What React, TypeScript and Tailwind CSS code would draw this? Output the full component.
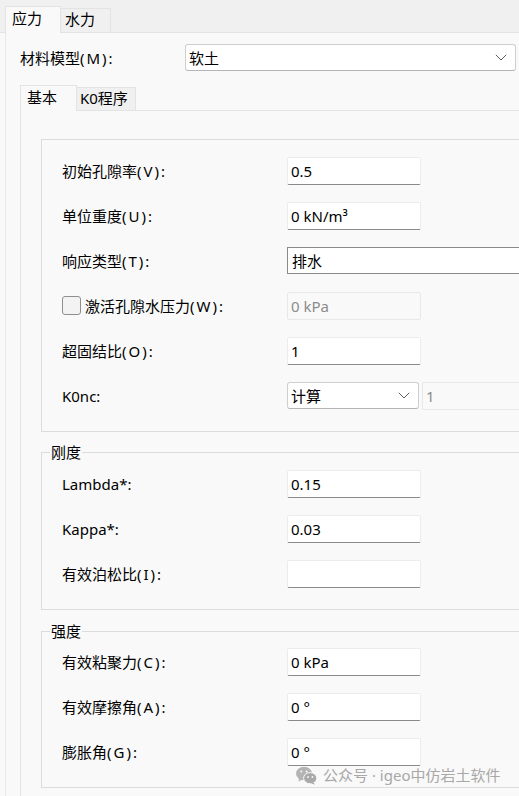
import React from "react";

const FONT = { fontFamily: '"Noto Sans", "Noto Sans CJK SC", sans-serif' };

function Chevron() {
  return (
    <svg width="12" height="7" viewBox="0 0 12 7" fill="none">
      <path d="M0.8 0.8 L6 6 L11.2 0.8" stroke="#5f5f5f" strokeWidth="1" />
    </svg>
  );
}

function Label({ text }: { text: string }) {
  const i = text.indexOf("(");
  if (i < 0) return <span>{text}</span>;
  return (
    <span>
      {text.slice(0, i)}
      <span className="tracking-[2px]">{text.slice(i)}</span>
    </span>
  );
}

function TextBox({ value, disabled }: { value: string; disabled?: boolean }) {
  if (disabled) {
    return (
      <div className="w-[134px] h-[28px] bg-[#f9f9f9] border border-[#e8e8e8] rounded-[2px] flex items-center pl-[3px] text-[#8c8c8c] text-[15px] leading-[20px]">
        {value}
      </div>
    );
  }
  return (
    <div className="w-[134px] h-[28px] bg-white border border-[#ececec] border-b-[#8a8a8a] rounded-[2px] flex items-center pl-[3px] text-black text-[15px] leading-[20px]">
      {value}
    </div>
  );
}

function Row({ label, children }: { label: React.ReactNode; children: React.ReactNode }) {
  return (
    <div className="h-[45px] flex items-center">
      <div className="w-[225px] text-[15px] leading-[20px] text-black">
        {typeof label === "string" ? <Label text={label} /> : label}
      </div>
      {children}
    </div>
  );
}

function Group({ title, children, pt }: { title?: string; children: React.ReactNode; pt: string }) {
  return (
    <div className={`relative border border-[#dcdcdc] ml-[20px] mr-[-40px] pl-[20px] pb-[13px] ${pt}`}>
      {title && (
        <span className="absolute top-[-11px] left-[8px] bg-[#f9f9f9] px-[1px] text-[15px] leading-[20px] text-black">
          {title}
        </span>
      )}
      {children}
    </div>
  );
}

export default function App() {
  return (
    <div className="relative w-[519px] h-[796px] overflow-hidden bg-[#f9f9f9]" style={FONT}>
      {/* outer tab strip */}
      <div className="h-[33px] bg-[#f0f0f0] border-b border-[#e3e3e3] flex items-end pl-[5px]">
        <div className="w-[56px] h-[27px] -mb-px bg-[#f9f9f9] border border-b-0 border-[#e3e3e3] pl-[6px] pt-[1px] text-[15px] leading-[20px] text-black">
          应力
        </div>
        <div className="w-[50px] h-[24px] border border-l-0 border-b-0 border-[#e3e3e3] pl-[4px] text-[15px] leading-[20px] text-black">
          水力
        </div>
      </div>

      <div className="ml-[5px] border-l border-[#e8e8e8] h-[763px]">
        {/* material model */}
        <div className="pt-[11px] pl-[14px] flex items-center">
          <div className="w-[165px] text-[15px] leading-[20px] text-black">
            <Label text="材料模型(M):" />
          </div>
          <div className="w-[331px] h-[27px] bg-white border border-[#cfcfcf] border-b-[#b5b5b5] rounded-[3px] flex items-center justify-between pl-[3px] pr-[8px] text-[15px] leading-[20px] text-black">
            <span>软土</span>
            <Chevron />
          </div>
        </div>

        {/* inner tabs */}
        <div className="mt-[15px] ml-[14px]">
          <div className="h-[25px] flex items-end border-b border-[#e3e3e3]">
            <div className="w-[57px] h-[26px] -mb-px bg-[#f9f9f9] border border-b-0 border-[#e3e3e3] pl-[6px] pt-[1px] text-[15px] leading-[20px] text-black">
              基本
            </div>
            <div className="w-[59px] h-[23px] bg-[#f0f0f0] border border-l-0 border-b-0 border-[#e3e3e3] pl-[3px] text-[15px] leading-[20px] text-black">
              K0程序
            </div>
          </div>

          <div className="border-l border-[#e3e3e3] pt-[28px] h-[700px]">
            <Group pt="pt-[8px]">
              <Row label="初始孔隙率(V):">
                <TextBox value="0.5" />
              </Row>
              <Row label="单位重度(U):">
                <TextBox value="0 kN/m³" />
              </Row>
              <Row label="响应类型(T):">
                <div className="w-[260px] h-[27px] bg-white border border-[#8a8a8a] flex items-center pl-[4px] text-[15px] leading-[20px] text-black">
                  排水
                </div>
              </Row>
              <Row
                label={
                  <div className="flex items-center">
                    <div className="w-[19px] h-[19px] rounded-[3px] border border-[#8f8f8f] bg-[#f3f3f3] mr-[4px]" />
                    <Label text="激活孔隙水压力(W):" />
                  </div>
                }
              >
                <TextBox value="0 kPa" disabled />
              </Row>
              <Row label="超固结比(O):">
                <TextBox value="1" />
              </Row>
              <Row label="K0nc:">
                <div className="flex items-center gap-[3px]">
                  <div className="w-[132px] h-[27px] bg-white border border-[#cfcfcf] border-b-[#b5b5b5] rounded-[3px] flex items-center justify-between pl-[3px] pr-[8px] text-[15px] leading-[20px] text-black">
                    <span>计算</span>
                    <Chevron />
                  </div>
                  <div className="w-[134px] h-[28px] bg-[#f9f9f9] border border-[#e8e8e8] rounded-[2px] flex items-center pl-[3px] text-[#8c8c8c] text-[15px] leading-[20px]">
                    1
                  </div>
                </div>
              </Row>
            </Group>

            <div className="h-[20px]" />
            <Group title="刚度" pt="pt-[8px]">
              <Row label="Lambda*:">
                <TextBox value="0.15" />
              </Row>
              <Row label="Kappa*:">
                <TextBox value="0.03" />
              </Row>
              <Row label="有效泊松比(I):">
                <TextBox value="" />
              </Row>
            </Group>

            <div className="h-[21px]" />
            <Group title="强度" pt="pt-[7px]">
              <Row label="有效粘聚力(C):">
                <TextBox value="0 kPa" />
              </Row>
              <Row label="有效摩擦角(A):">
                <TextBox value="0 °" />
              </Row>
              <Row label="膨胀角(G):">
                <TextBox value="0 °" />
              </Row>
            </Group>
          </div>
        </div>
      </div>

      {/* watermark */}
      <div className="absolute left-[296px] top-[765px] flex items-center gap-[6px] text-[#a8a8a8] text-[15px] leading-[20px]">
        <svg width="21" height="19" viewBox="0 0 21 19">
          <ellipse cx="8" cy="7.5" rx="8" ry="6.8" fill="#b4b4b4" />
          <path d="M3 12 L2.5 15.5 L6.5 13.5 Z" fill="#b4b4b4" />
          <ellipse cx="14.2" cy="12.2" rx="6.6" ry="5.6" fill="#a9a9a9" stroke="#f9f9f9" strokeWidth="1" />
          <path d="M17.5 16.5 L19 18.8 L15 17.3 Z" fill="#a9a9a9" />
          <circle cx="5.3" cy="5.4" r="1" fill="#f9f9f9" />
          <circle cx="10.6" cy="5.4" r="1" fill="#f9f9f9" />
          <circle cx="12" cy="11" r="0.9" fill="#f9f9f9" />
          <circle cx="16.4" cy="11" r="0.9" fill="#f9f9f9" />
        </svg>
        <span>公众号 · igeo中仿岩土软件</span>
      </div>
    </div>
  );
}
